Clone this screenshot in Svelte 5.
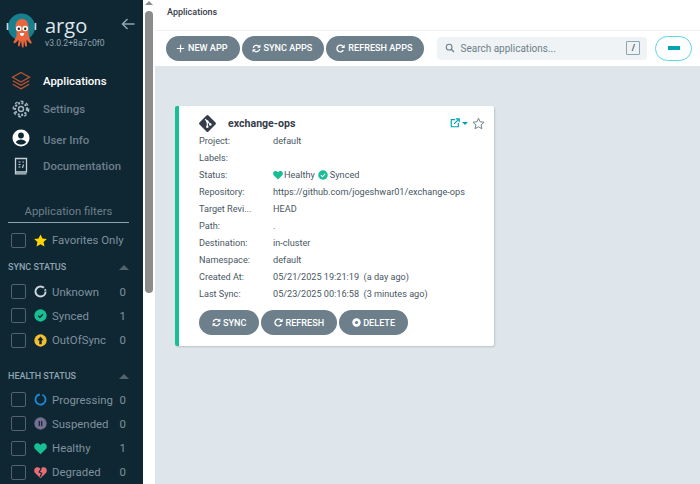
<script>
	const syncRows = [
		{ name: 'Unknown', count: 0, icon: 'unknown' },
		{ name: 'Synced', count: 1, icon: 'synced' },
		{ name: 'OutOfSync', count: 0, icon: 'outofsync' }
	];
	const healthRows = [
		{ name: 'Progressing', count: 0, icon: 'progressing' },
		{ name: 'Suspended', count: 0, icon: 'suspended' },
		{ name: 'Healthy', count: 1, icon: 'healthy' },
		{ name: 'Degraded', count: 0, icon: 'degraded' }
	];
	const heart = 'M8 15 1 8.2C-.4 6.2.1 3.2 2.2 2.1 4.2 1.1 6.5 1.7 8 3.7 9.5 1.700 11.8 1.100 13.8 2.100 15.900 3.200 16.400 6.200 15 8.200z';
</script>

{#snippet statusIcon(kind)}
	<svg class="status-icon" viewBox="0 0 16 16" aria-hidden="true">
		{#if kind === 'unknown'}
			<circle cx="8" cy="8" r="6.2" fill="none" stroke="#ccd6dd" stroke-width="2.4" stroke-dasharray="33 2 2 2" />
		{:else if kind === 'synced'}
			<circle cx="8" cy="8" r="7.6" fill="#18be94" />
			<path d="M5 8.200 7.200 10.200 11 6.400" fill="none" stroke="#0f2733" stroke-width="1.500" />
		{:else if kind === 'outofsync'}
			<circle cx="8" cy="8" r="7.6" fill="#f4c030" />
			<path d="M8 3.200 11.800 7.600H9.500v5H6.500v-5H4.200z" fill="#0f2733" />
		{:else if kind === 'progressing'}
			<circle cx="8" cy="8" r="6.200" fill="none" stroke="#1e88d8" stroke-width="2.200" stroke-dasharray="35 4" transform="rotate(-70 8 8)" />
		{:else if kind === 'suspended'}
			<circle cx="8" cy="8" r="7.600" fill="#766f94" />
			<path d="M5.800 5h1.500v6H5.800zM8.700 5h1.500v6H8.700z" fill="#0f2733" />
		{:else if kind === 'healthy'}
			<path d={heart} fill="#18be94" />
		{:else}
			<path d={heart} fill="#e96d76" />
			<path d="M9 3 6.200 7.500 9.500 9 7.500 13.500" fill="none" stroke="#0f2733" stroke-width="1.400" />
		{/if}
	</svg>
{/snippet}

{#snippet filterRow(row)}
	<div class="filter-row">
		<span class="check"></span>
		{@render statusIcon(row.icon)}
		<span class="filter-name">{row.name}</span>
		<span class="filter-count">{row.count}</span>
	</div>
{/snippet}

{#snippet syncIcon()}
	<svg class="btn-icon" viewBox="0 0 16 16" aria-hidden="true">
		<path d="M2.200 6.800A6 6 0 0 1 12.300 4.200" fill="none" stroke="currentColor" stroke-width="2.400" />
		<path d="M15 .8v6H9z" fill="currentColor" />
		<path d="M13.800 9.200A6 6 0 0 1 3.700 11.800" fill="none" stroke="currentColor" stroke-width="2.400" />
		<path d="M1 15.200v-6h6z" fill="currentColor" />
	</svg>
{/snippet}

{#snippet refreshIcon()}
	<svg class="btn-icon" viewBox="0 0 16 16" aria-hidden="true">
		<path d="M13 11A6 6 0 1 1 12.300 4.200" fill="none" stroke="currentColor" stroke-width="2.400" />
		<path d="M15.400 .8v6.400H9z" fill="currentColor" />
	</svg>
{/snippet}

<div class="page">
	<aside class="sidebar">
		<div class="logo-row">
			<svg class="logo" viewBox="0 0 32 38" aria-hidden="true">
				<circle cx="15.500" cy="14" r="13.500" fill="#17808f" />
				<path d="M1.500 10v7M29.500 10v7" stroke="#c9d6da" stroke-width="1.600" />
				<path d="M9.500 15c0-6 2.500-9 6.500-9s6.500 3 6.500 9v5c0 4 1.500 6 3 9 .8 1.500-.8 2-1.800 1-1.500-1.500-2.500-2.500-3.200-3.500l.5 6c.1 1.500-1.800 1.500-2 0l-1-5-.5 7h-1.500l-1-7-1.200 5c-.4 1.500-2 1.200-1.800-.2l.7-5.800c-1 1.200-2 2.500-3.500 3.500-1 .7-2.300-.2-1.500-1.400 1.700-3 3-5 3-9z" fill="#e9663c" />
				<circle cx="12.800" cy="15.500" r="2.800" fill="#fff" />
				<circle cx="19.200" cy="15.500" r="2.800" fill="#fff" />
				<circle cx="12.800" cy="15.800" r="1.200" fill="#222" />
				<circle cx="19.200" cy="15.800" r="1.200" fill="#222" />
				<path d="M13.800 20h4.400c0 2-1 3-2.200 3s-2.200-1-2.200-3z" fill="#fff" />
			</svg>
			<div class="brand">
				<div class="brand-name">argo</div>
				<div class="brand-version">v3.0.2+8a7c0f0</div>
			</div>
			<svg class="collapse" viewBox="0 0 14 12" aria-hidden="true">
				<path d="M13.500 6H2M6.500 1 1.500 6l5 5" fill="none" stroke="#8fa4b1" stroke-width="1.500" />
			</svg>
		</div>

		<nav class="nav">
			<div class="nav-item active">
				<svg class="nav-icon" viewBox="0 0 20 20" aria-hidden="true">
					<path d="M10 1.500 18.500 6.300 10 11 1.500 6.300zM1.800 9.700 10 14.300 18.200 9.700M1.800 13.200 10 17.800 18.200 13.200" fill="none" stroke="#c0532f" stroke-width="1.300" />
				</svg>
				<span>Applications</span>
			</div>
			<div class="nav-item">
				<svg class="nav-icon" viewBox="0 0 20 20" aria-hidden="true">
					<circle cx="10" cy="10" r="6" fill="none" stroke="#a9b7c0" stroke-width="2.200" stroke-dasharray="2 1.500" />
					<circle cx="10" cy="10" r="2.500" fill="none" stroke="#a9b7c0" stroke-width="1.400" />
					<circle cx="10" cy="10" r="7.800" fill="none" stroke="#a9b7c0" stroke-width="1.300" stroke-dasharray="3 3" />
				</svg>
				<span>Settings</span>
			</div>
			<div class="nav-item user">
				<svg class="nav-icon" viewBox="0 0 20 20" aria-hidden="true">
					<circle cx="10" cy="10" r="8.500" fill="#fff" />
					<circle cx="10" cy="7.500" r="2.900" fill="#0f2733" />
					<path d="M4.800 14.200c1-2 3-2.800 5.200-2.800s4.200.8 5.200 2.800c-1.300 1.500-3.100 2.300-5.200 2.300s-3.900-.8-5.200-2.300z" fill="#0f2733" />
				</svg>
				<span>User Info</span>
			</div>
			<div class="nav-item">
				<svg class="nav-icon" viewBox="0 0 20 20" aria-hidden="true">
					<path d="M4.500 2.500h11v13.500h-11zM4.500 16v1.800h11" fill="none" stroke="#c3ced5" stroke-width="1.300" />
					<path d="M7.500 6h2M7.500 8.500h2M7.500 11h2M11.500 6H13M12.500 8.500l-1 3.500" fill="none" stroke="#c3ced5" stroke-width="1.100" />
				</svg>
				<span>Documentation</span>
			</div>
		</nav>

		<div class="filters-title">Application filters</div>
		<div class="filter-row favorite">
			<span class="check"></span>
			<svg class="status-icon" viewBox="0 0 16 16" aria-hidden="true">
				<path d="M8 .5 10.400 5.400 15.800 6.100 11.800 9.900 12.900 15.300 8 12.600 3.100 15.300 4.200 9.900.2 6.100 5.600 5.400z" fill="#ffd500" />
			</svg>
			<span class="filter-name">Favorites Only</span>
		</div>

		<div class="group-head"><span>SYNC STATUS</span><i class="caret"></i></div>
		{#each syncRows as row}
			{@render filterRow(row)}
		{/each}

		<div class="group-head health"><span>HEALTH STATUS</span><i class="caret"></i></div>
		{#each healthRows as row}
			{@render filterRow(row)}
		{/each}
	</aside>

	<div class="scrollbar">
		<i class="arrow"></i>
		<div class="thumb"></div>
	</div>

	<main class="content">
		<header class="topbar">Applications</header>
		<div class="toolbar">
			<div class="actions">
				<button class="btn">
					<svg class="btn-icon" viewBox="0 0 16 16" aria-hidden="true">
						<path d="M8 1.500v13M1.500 8h13" fill="none" stroke="currentColor" stroke-width="2.200" />
					</svg>
					NEW APP
				</button>
				<button class="btn">{@render syncIcon()} SYNC APPS</button>
				<button class="btn">{@render refreshIcon()} REFRESH APPS</button>
			</div>
			<div class="search">
				<svg class="search-icon" viewBox="0 0 14 14" aria-hidden="true">
					<circle cx="5.800" cy="5.800" r="4" fill="none" stroke="#6d7f8b" stroke-width="1.500" />
					<path d="M8.800 8.800 12.500 12.500" stroke="#6d7f8b" stroke-width="1.800" />
				</svg>
				<span class="placeholder">Search applications...</span>
				<span class="kbd">/</span>
			</div>
			<div class="view-toggle"><i></i></div>
		</div>

		<section class="card-area">
			<article class="card">
				<div class="card-head">
					<svg class="git" viewBox="0 0 20 20" aria-hidden="true">
						<rect x="3.300" y="3.300" width="13.400" height="13.400" rx="1.500" transform="rotate(45 10 10)" fill="#363c4a" />
						<path d="M7.500 5.500 13 11M9.800 7.800v6" fill="none" stroke="#fff" stroke-width="1.200" />
						<circle cx="9.800" cy="7.800" r="1.300" fill="#fff" />
						<circle cx="9.800" cy="13.500" r="1.300" fill="#fff" />
						<circle cx="13" cy="11" r="1.300" fill="#fff" />
					</svg>
					<h2>exchange-ops</h2>
					<svg class="ext" viewBox="0 0 12 12" aria-hidden="true">
						<path d="M6 2H1.500v8.500H10V6" fill="none" stroke="#00a2b3" stroke-width="1.400" />
						<path d="M5 7 10 2M7 1h4v4" fill="none" stroke="#00a2b3" stroke-width="1.400" />
					</svg>
					<i class="ext-caret"></i>
					<svg class="star" viewBox="0 0 16 16" aria-hidden="true">
						<path d="M8 1.500 10 5.900 14.800 6.400 11.200 9.700 12.200 14.400 8 12 3.800 14.400 4.800 9.700 1.200 6.400 6 5.900z" fill="none" stroke="#6d7f8b" stroke-width="1.200" />
					</svg>
				</div>
				<dl class="fields">
					<dt>Project:</dt><dd>default</dd>
					<dt>Labels:</dt><dd></dd>
					<dt>Status:</dt>
					<dd class="status">
						<svg class="mini" viewBox="0 0 16 16" aria-hidden="true"><path d={heart} fill="#18be94" /></svg>
						Healthy
						<svg class="mini" viewBox="0 0 16 16" aria-hidden="true">
							<circle cx="8" cy="8" r="7.600" fill="#18be94" />
							<path d="M4.500 8.200 7.200 10.800 11.500 6.300" fill="none" stroke="#fff" stroke-width="1.700" />
						</svg>
						Synced
					</dd>
					<dt>Repository:</dt><dd>https://github.com/jogeshwar01/exchange-ops</dd>
					<dt>Target Revi...</dt><dd>HEAD</dd>
					<dt>Path:</dt><dd>.</dd>
					<dt>Destination:</dt><dd>in-cluster</dd>
					<dt>Namespace:</dt><dd>default</dd>
					<dt>Created At:</dt><dd>05/21/2025 19:21:19&nbsp; (a day ago)</dd>
					<dt>Last Sync:</dt><dd>05/23/2025 00:16:58&nbsp; (3 minutes ago)</dd>
				</dl>
				<div class="card-actions">
					<button class="btn small">{@render syncIcon()} SYNC</button>
					<button class="btn small">{@render refreshIcon()} REFRESH</button>
					<button class="btn small">
						<svg class="btn-icon" viewBox="0 0 16 16" aria-hidden="true">
							<circle cx="8" cy="8" r="7.500" fill="currentColor" />
							<circle cx="8" cy="8" r="2.800" fill="#6d7f8b" />
						</svg>
						DELETE
					</button>
				</div>
			</article>
		</section>
	</main>
</div>

<style>
	:global(body) {
		margin: 0;
		font-family: Roboto, sans-serif;
		overflow: hidden;
	}

	.page {
		display: flex;
		width: 700px;
		height: 484px;
		overflow: hidden;
	}

	.sidebar {
		width: 143px;
		flex-shrink: 0;
		box-sizing: border-box;
		background: #0f2733;
		color: #8fa4b1;
		padding: 13px 0 0 8px;
		overflow: hidden;
	}

	.logo-row {
		display: flex;
		align-items: flex-start;
		height: 38px;
	}

	.logo {
		width: 32px;
		height: 38px;
		margin-left: -2px;
		flex-shrink: 0;
	}

	.brand {
		margin-left: 7px;
	}

	.brand-name {
		font-family: "Open Sans", sans-serif;
		font-size: 20px;
		line-height: 25px;
		color: #dde6ea;
	}

	.brand-version {
		font-size: 8.6px;
		line-height: 11px;
		color: #8fa4b1;
	}

	.collapse {
		width: 14px;
		height: 12px;
		margin: 5px 0 0 16px;
	}

	.nav {
		margin-top: 16px;
		display: flex;
		flex-direction: column;
	}

	.nav-item {
		display: flex;
		align-items: center;
		height: 28.3px;
		font-size: 11.4px;
		font-weight: 500;
		color: #6d7f8b;
		padding-left: 3px;
	}

	.nav-item.active {
		color: #fff;
	}

	.nav-icon {
		width: 20px;
		height: 20px;
		margin-right: 12px;
		flex-shrink: 0;
	}

	.user span {
		margin-top: 4px;
	}

	.filters-title {
		margin: 25px 14px 0 0;
		padding-bottom: 3px;
		border-bottom: 1px solid #8fa4b1;
		font-size: 11.3px;
		line-height: 14px;
		text-align: center;
		color: #6d7f8b;
	}

	.filter-row {
		display: flex;
		align-items: center;
		height: 24.3px;
		font-size: 11.4px;
		color: #7f919d;
	}

	.favorite {
		margin-top: 5px;
	}

	.check {
		width: 13px;
		height: 13px;
		margin: 0 8px 0 3px;
		border: 1px solid #54626c;
		border-radius: 2px;
		flex-shrink: 0;
	}

	.status-icon {
		width: 13px;
		height: 13px;
		margin-right: 5px;
		flex-shrink: 0;
	}

	.filter-name {
		flex: 1;
		white-space: nowrap;
	}

	.filter-count {
		width: 12px;
		margin-right: 17px;
		text-align: right;
	}

	.group-head {
		display: flex;
		align-items: center;
		justify-content: space-between;
		margin: 8px 14px 5px 0;
		height: 14px;
		font-size: 9px;
		font-weight: 500;
		color: #8fa4b1;
	}

	.group-head.health {
		margin-top: 17px;
		margin-bottom: 4px;
	}

	.caret {
		width: 0;
		height: 0;
		border-left: 5px solid transparent;
		border-right: 5px solid transparent;
		border-bottom: 5px solid #54626c;
	}

	.scrollbar {
		width: 12px;
		flex-shrink: 0;
		background: #fff;
		padding-left: 2px;
		box-sizing: border-box;
	}

	.arrow {
		display: block;
		width: 0;
		height: 0;
		margin: 1px 0 0 0;
		border-left: 4px solid transparent;
		border-right: 4px solid transparent;
		border-bottom: 4px solid #8c8c8c;
	}

	.thumb {
		width: 8px;
		height: 282px;
		margin-top: 6px;
		border-radius: 4px;
		background: #8c8c8c;
	}

	.content {
		flex: 1;
		min-width: 0;
		display: flex;
		flex-direction: column;
		background: #dee6eb;
	}

	.topbar {
		height: 31px;
		box-sizing: border-box;
		padding: 6px 0 0 12px;
		background: #fff;
		border-bottom: 1px solid #eef1f3;
		font-size: 9px;
		font-weight: 500;
		line-height: 12px;
		color: #363c4a;
	}

	.toolbar {
		display: flex;
		align-items: center;
		height: 35px;
		box-sizing: border-box;
		padding: 0 0 1px 11px;
		background: #fff;
	}

	.actions {
		display: flex;
		gap: 2px;
	}

	.btn {
		display: flex;
		align-items: center;
		gap: 3px;
		height: 25px;
		padding: 0 12px 0 10px;
		border: 0;
		border-radius: 13px;
		background: #6d7f8b;
		color: #fff;
		font-family: Roboto, sans-serif;
		font-size: 9.1px;
		font-weight: 500;
		white-space: nowrap;
	}

	.btn-icon {
		width: 9px;
		height: 9px;
	}

	.search {
		display: flex;
		align-items: center;
		width: 210px;
		height: 23px;
		box-sizing: border-box;
		margin-left: 13px;
		padding: 0 7px 0 8px;
		background: #eff3f5;
		border-radius: 4px;
		font-size: 10px;
		color: #6d7f8b;
	}

	.search-icon {
		width: 10px;
		height: 10px;
		margin-right: 5px;
	}

	.placeholder {
		flex: 1;
	}

	.kbd {
		width: 14px;
		height: 14px;
		box-sizing: border-box;
		border: 1px solid #8fa4b1;
		border-radius: 1px;
		text-align: center;
		font-size: 9px;
		font-weight: 700;
		line-height: 12px;
		color: #495763;
	}

	.view-toggle {
		display: flex;
		align-items: center;
		justify-content: center;
		width: 37px;
		height: 25px;
		box-sizing: border-box;
		margin-left: 8px;
		border: 1px solid #5dd6e6;
		border-radius: 13px;
		background: #fff;
	}

	.view-toggle i {
		width: 12px;
		height: 4px;
		background: #00a2b3;
	}

	.card-area {
		flex: 1;
		padding: 40px 0 0 20px;
	}

	.card {
		width: 319px;
		height: 240px;
		box-sizing: border-box;
		padding: 7px 9px 0 20px;
		background: #fff;
		border-left: 4px solid #18be94;
		border-radius: 2px;
		box-shadow: 1px 1px 2px rgba(0, 0, 0, 0.15);
		font-size: 9.15px;
		color: #495763;
	}

	.card-head {
		display: flex;
		align-items: center;
		height: 20px;
	}

	.git {
		width: 19px;
		height: 19px;
		margin-left: -1px;
	}

	h2 {
		flex: 1;
		margin: 0 0 0 11px;
		font-size: 10.6px;
		font-weight: 700;
		color: #363c4a;
	}

	.ext {
		width: 10px;
		height: 10px;
	}

	.ext-caret {
		width: 0;
		height: 0;
		margin: 0 4px 0 2px;
		border-left: 3px solid transparent;
		border-right: 3px solid transparent;
		border-top: 3px solid #00a2b3;
	}

	.star {
		width: 13px;
		height: 13px;
	}

	.fields {
		display: grid;
		grid-template-columns: 74px 1fr;
		grid-auto-rows: 16.95px;
		align-items: center;
		margin: 0;
	}

	dt, dd {
		margin: 0;
		white-space: nowrap;
	}

	.status {
		display: flex;
		align-items: center;
		gap: 1px;
	}

	.mini {
		width: 10px;
		height: 10px;
	}

	.mini + .mini {
		margin-left: 1px;
	}

	.status .mini:last-of-type {
		margin-left: 2px;
		margin-right: 1px;
	}

	.card-actions {
		display: flex;
		gap: 2px;
		margin-top: 8px;
	}

	.btn.small {
		gap: 2px;
		padding: 0 13px;
	}
</style>
